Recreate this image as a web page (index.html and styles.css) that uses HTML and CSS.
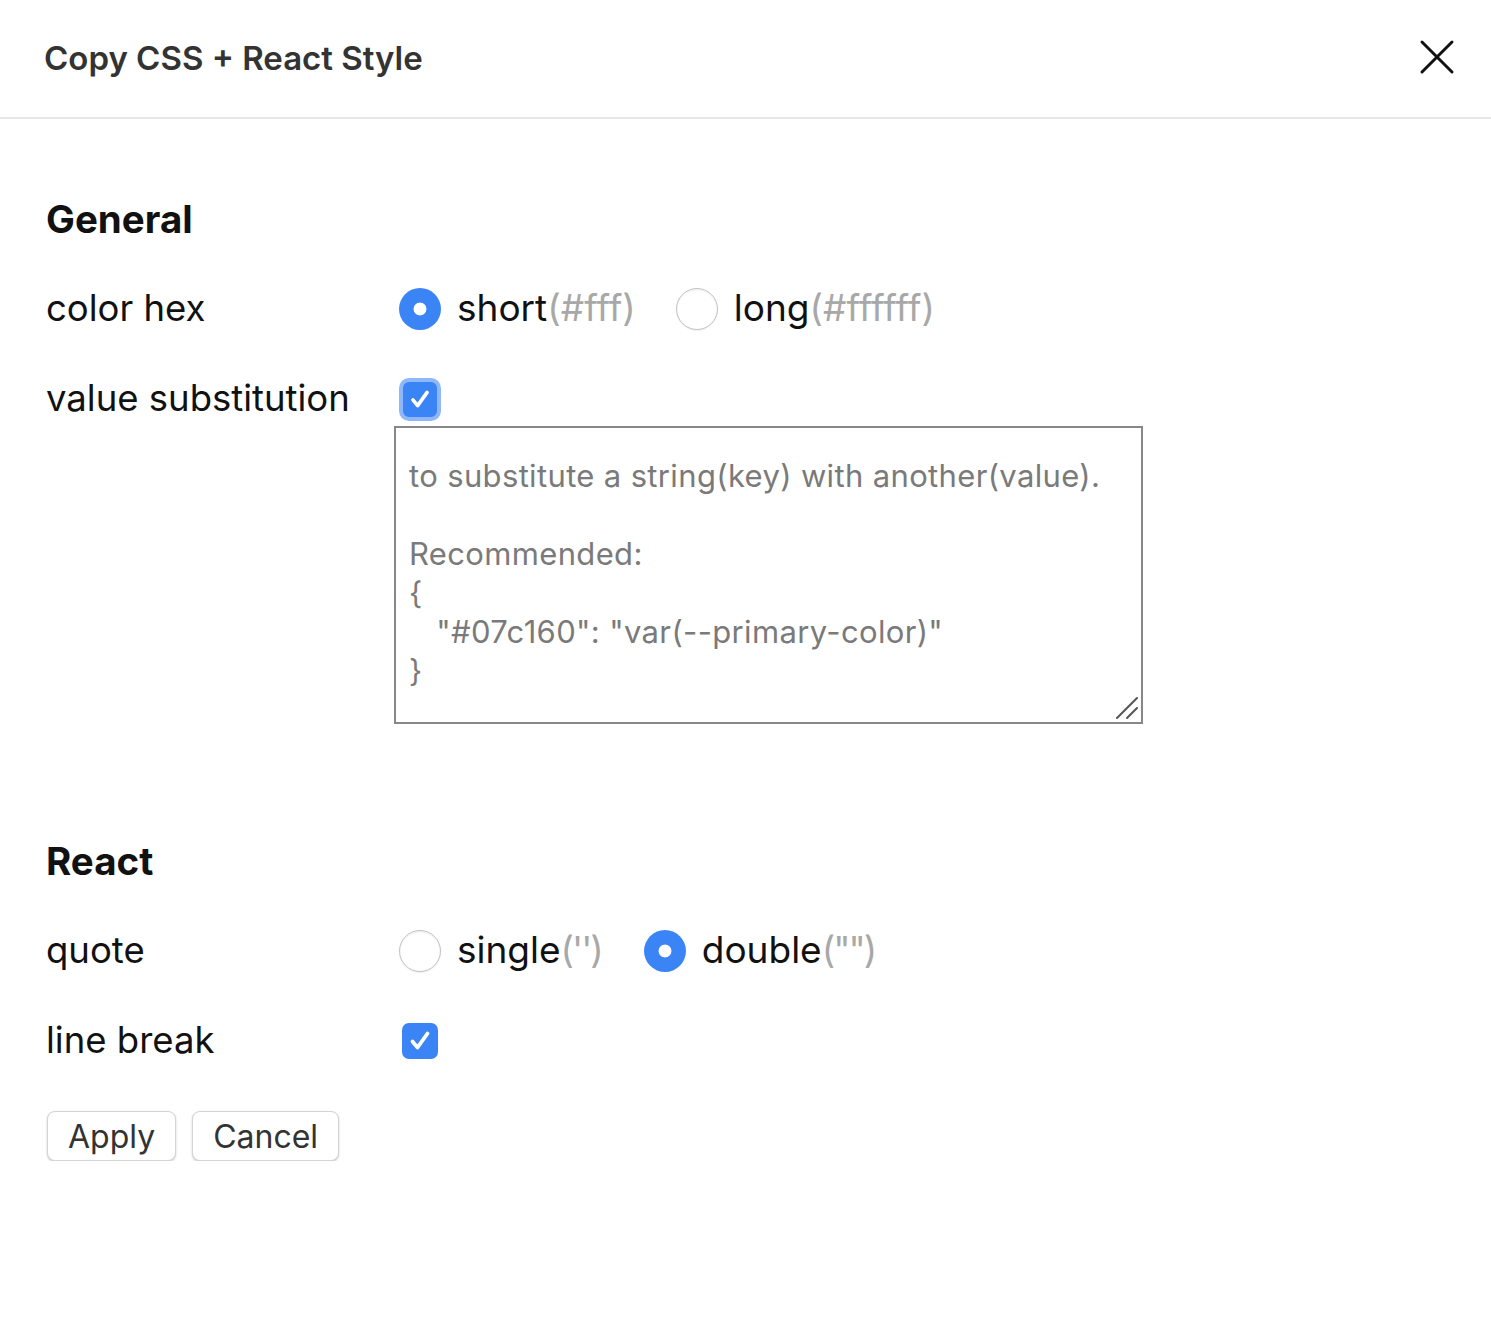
FILE: index.html
```html
<!DOCTYPE html>
<html lang="en">
<head>
<meta charset="utf-8">
<title>Copy CSS + React Style</title>
<link rel="stylesheet" href="styles.css">
</head>
<body>
<div class="dialog">
  <header class="header">
    <h1 class="title">Copy CSS + React Style</h1>
    <button class="close" aria-label="Close">
      <svg width="36" height="36" viewBox="0 0 36 36"><path d="M3 3 L33 33 M33 3 L3 33" stroke="#111" stroke-width="3" stroke-linecap="round" fill="none"/></svg>
    </button>
  </header>
  <main class="content">
    <section class="group">
      <h2 class="group-title">General</h2>
      <div class="row first">
        <div class="label">color hex</div>
        <div class="controls">
          <label class="option"><input type="radio" name="hex" checked><span class="opt-text">short</span><span class="hint">(#fff)</span></label>
          <label class="option"><input type="radio" name="hex"><span class="opt-text">long</span><span class="hint">(#ffffff)</span></label>
        </div>
      </div>
      <div class="row">
        <div class="label">value substitution</div>
        <div class="controls">
          <input type="checkbox" class="check focused" checked>
        </div>
      </div>
      <div class="row-area">
        <div class="area-wrap">
          <textarea class="area" placeholder="to substitute a string(key) with another(value).&#10;&#10;Recommended:&#10;{&#10;   &quot;#07c160&quot;: &quot;var(--primary-color)&quot;&#10;}"></textarea>
        </div>
      </div>
    </section>
    <section class="group react">
      <h2 class="group-title">React</h2>
      <div class="row first">
        <div class="label">quote</div>
        <div class="controls">
          <label class="option"><input type="radio" name="quote"><span class="opt-text">single</span><span class="hint tight">('')</span></label>
          <label class="option"><input type="radio" name="quote" checked><span class="opt-text">double</span><span class="hint tight">("")</span></label>
        </div>
      </div>
      <div class="row">
        <div class="label">line break</div>
        <div class="controls">
          <input type="checkbox" class="check small" checked>
        </div>
      </div>
    </section>
    <div class="actions">
      <button class="btn">Apply</button>
      <button class="btn">Cancel</button>
    </div>
  </main>
</div>
</body>
</html>
```

FILE: styles.css
```css
* { box-sizing: border-box; }
html, body { margin: 0; padding: 0; background: #fff; }
body { font-family: Inter, "Noto Sans", "Liberation Sans", sans-serif; color: #111; }

.header {
  height: 119px;
  border-bottom: 2px solid #e6e6e6;
  display: flex;
  align-items: center;
  justify-content: space-between;
  padding: 0 36px 0 44px;
}
.title {
  margin: -2px 0 0;
  font-size: 33px;
  font-weight: 600;
  color: #333;
}
.close {
  border: 0;
  background: transparent;
  padding: 0;
  width: 36px;
  height: 36px;
  display: flex;
  margin-top: -3px;
}

.content { padding: 0 46px; }
.group-title {
  margin: 77px 0 0;
  font-size: 38.5px;
  line-height: 46px;
  font-weight: 700;
  color: #111;
}
.react .group-title { margin-top: 114px; }

.row {
  display: grid;
  grid-template-columns: 348px 1fr;
  align-items: center;
  height: 46px;
  margin-top: 44px;
}
.row.first { margin-top: 44px; }
.label { font-size: 36.5px; color: #111; margin-top: -2px; }
.controls { display: flex; align-items: center; gap: 40px; padding-left: 5px; }
.option { display: flex; align-items: center; font-size: 37px; color: #111; }
.option span { margin-top: -3px; }
.opt-text { margin-left: 16px; }
.hint { color: #a8a8a8; }
.hint.tight { letter-spacing: -2px; padding-right: 2px; }

input[type="radio"] {
  appearance: none;
  -webkit-appearance: none;
  margin: 0;
  width: 42px;
  height: 42px;
  border-radius: 50%;
  border: 1.5px solid #c4c4c4;
  background: #fff;
  box-shadow: inset 0 1px 2px rgba(0,0,0,0.08), 0 1px 1px rgba(0,0,0,0.06);
  flex: none;
}
input[type="radio"]:checked {
  border: 0;
  background: radial-gradient(circle, #fff 0 6px, #3b84f6 6.8px);
  box-shadow: none;
}

.check {
  appearance: none;
  -webkit-appearance: none;
  margin: 0;
  width: 42px;
  height: 42px;
  border-radius: 9px;
  background: #3b84f6 url("data:image/svg+xml,%3Csvg xmlns='http://www.w3.org/2000/svg' viewBox='0 0 36 36'%3E%3Cpath d='M10.5 18.5 L15.5 24.5 L25.5 10.5' stroke='white' stroke-width='3.8' fill='none' stroke-linecap='round' stroke-linejoin='round'/%3E%3C/svg%3E") center / 100% 100% no-repeat;
  flex: none;
}
.check.focused {
  border: 4px solid #8fb8fb;
  border-radius: 10px;
  height: 43px;
}
.check.small { width: 36px; height: 36px; border-radius: 7px; margin-left: 3px; }

.row-area { padding-left: 348px; margin-top: 4px; }
.area-wrap { position: relative; width: 749px; }
.area-wrap::after {
  content: "";
  position: absolute;
  right: 4px;
  bottom: 4px;
  width: 24px;
  height: 24px;
  pointer-events: none;
  background: url("data:image/svg+xml,%3Csvg xmlns='http://www.w3.org/2000/svg' viewBox='0 0 24 24'%3E%3Cpath d='M2 22 L22 2 M12 22 L22 12' stroke='%23555' stroke-width='2' fill='none' stroke-linecap='round'/%3E%3C/svg%3E") center / 100% 100% no-repeat;
}
.area {
  display: block;
  width: 749px;
  height: 298px;
  border: 2px solid #878787;
  padding: 28px 13px;
  font-family: inherit;
  font-size: 31px;
  line-height: 39px;
  letter-spacing: 0.35px;
  color: #666;
  outline: none;
  resize: none;
}
.area::placeholder { color: #7a7a7a; opacity: 1; }

.actions { display: flex; gap: 16px; margin-top: 47px; padding-left: 1px; }
.btn {
  height: 50px;
  padding: 0 20px;
  font-family: inherit;
  font-size: 32px;
  color: #333;
  background: #fff;
  border: 1px solid #d4d4d4;
  border-radius: 8px;
  box-shadow: 0 1px 2px rgba(0,0,0,0.22);
}
```
